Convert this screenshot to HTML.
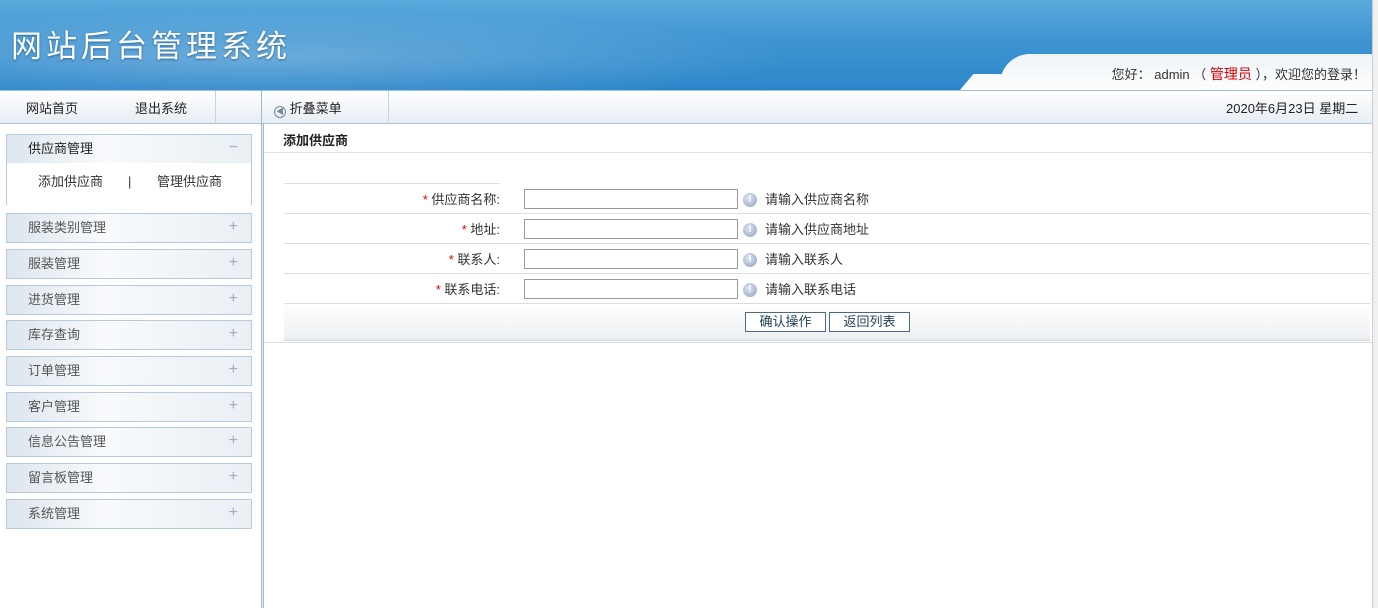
<!DOCTYPE html>
<html><head><meta charset="utf-8">
<style>
*{margin:0;padding:0;box-sizing:border-box}
body{width:1378px;height:608px;overflow:hidden;background:#fff;font-family:"Liberation Sans","Noto Sans CJK SC",sans-serif;font-size:12px;line-height:16px;color:#333;position:relative}
.hdr{position:absolute;left:0;top:0;width:1372px;height:90px;background:linear-gradient(180deg,#5aa9dc 0%,#3f95d2 45%,#2b86c9 100%);overflow:hidden}
.hdr .glow{position:absolute;left:-100px;top:10px;width:900px;height:80px;background:radial-gradient(ellipse at 40% 60%,rgba(255,255,255,.25),rgba(255,255,255,0) 70%)}
.title{position:absolute;left:11px;top:25px;font-size:31px;line-height:38px;color:#fff;letter-spacing:4px;font-family:"Noto Sans CJK SC",sans-serif;text-shadow:0 1px 2px rgba(0,40,90,.5)}
.tab{position:absolute;left:1000px;top:54px;width:400px;height:40px;background:linear-gradient(180deg,#eef3f7,#fff);border-radius:30px 0 0 0}
.tab2{position:absolute;left:965px;top:74px;width:60px;height:20px;transform:skewX(-40deg);background:linear-gradient(180deg,#f6f9fb,#fff)}
.welcome{position:absolute;right:6px;top:66px;font-size:13px;color:#333}
.welcome b{color:#d00;font-weight:normal;font-size:14px}
.scroll{position:absolute;left:1372px;top:0;width:6px;height:608px;background:#f0f0f0;border-left:1px solid #ccc}
.nav{position:absolute;left:0;top:90px;width:1372px;height:34px;background:linear-gradient(180deg,#fff,#e6edf3);border-top:1px solid #9fc0dc;border-bottom:1px solid #a8c3da}
.nav span{position:absolute;top:10px;font-size:13px;color:#222}
.vl{position:absolute;top:0;width:1px;height:33px;background:#c7d3de}
.side{position:absolute;left:261px;top:124px;width:3px;height:484px;border-left:1px solid #9fbbd3;border-right:1px solid #9fbbd3;background:#e6eef5}
.box{position:absolute;left:6px;width:246px;border:1px solid #b7cbdc;background:#fff}
.item{height:28px;background:linear-gradient(90deg,#dde6ee,#f8fafc 40%,#e9eff4);font-size:13px;color:#555;padding:6px 0 0 21px;position:relative}
.item i{position:absolute;right:13px;top:5px;font-style:normal;color:#aab;font-size:16px;line-height:16px}
.sub{height:42px;font-size:13px;color:#333;position:relative}
.sub span{position:absolute;top:11px}
.ctitle{position:absolute;left:264px;top:124px;width:1108px;height:29px;border-bottom:1px solid #dbe3ea;font-weight:bold;font-size:13px;color:#222;padding:9px 0 0 19px}
.row{position:absolute;left:284px;width:1086px;height:30px;border-bottom:1px solid #dcdcdc}
.row .l{position:absolute;right:870px;top:8px;font-size:13px;color:#333}
.row .l em{color:#d00;font-style:normal}
.row input{position:absolute;left:240px;top:5px;width:214px;height:20px;border:1px solid #999;background:#fff}
.row .ic{position:absolute;left:459px;top:9px;width:14px;height:14px;border-radius:50%;background:radial-gradient(circle at 40% 35%,#dbe4f2,#8fa2bf);color:#fff;font-size:10px;text-align:center;line-height:14px;font-weight:bold}
.row .h{position:absolute;left:481px;top:8px;font-size:13px}
.btnrow{position:absolute;left:284px;top:304px;width:1086px;height:37px;background:linear-gradient(180deg,#fff,#eceff2);border-bottom:1px solid #cfd6dc}
.btn{position:absolute;top:8px;height:20px;border:1px solid #4b6a8a;background:#fff;font-size:13px;color:#245;text-align:center;line-height:18px}
</style></head><body>
<div class="hdr"><div class="glow"></div><div class="title">网站后台管理系统</div><div class="tab2"></div><div class="tab"></div>
<div class="welcome">您好： admin （ <b>管理员</b> ），欢迎您的登录！</div></div>
<div class="scroll"></div>
<div class="nav">
<span style="left:26px">网站首页</span><span style="left:135px">退出系统</span>
<div class="vl" style="left:215px"></div><div class="vl" style="left:261px;background:#9fbbd3"></div>
<span style="left:274px"><span style="position:static;display:inline-block;width:12px;height:12px;border:1px solid #789;border-radius:50%;font-size:8px;line-height:10px;text-align:center;color:#789;vertical-align:-1px">◀</span> 折叠菜单</span>
<div class="vl" style="left:388px"></div>
<span style="left:1226px">2020年6月23日 星期二</span>
</div>
<div class="side"></div>
<div class="box" style="top:134px;height:71px"><div class="item" style="color:#222">供应商管理<i>−</i></div>
<div class="sub" style="background:#fff"><span style="left:31px">添加供应商</span><span style="left:121px">|</span><span style="left:150px">管理供应商</span></div></div>
<div class="box" style="top:213px"><div class="item">服装类别管理<i>+</i></div></div>
<div class="box" style="top:249px"><div class="item">服装管理<i>+</i></div></div>
<div class="box" style="top:285px"><div class="item">进货管理<i>+</i></div></div>
<div class="box" style="top:320px"><div class="item">库存查询<i>+</i></div></div>
<div class="box" style="top:356px"><div class="item">订单管理<i>+</i></div></div>
<div class="box" style="top:392px"><div class="item">客户管理<i>+</i></div></div>
<div class="box" style="top:427px"><div class="item">信息公告管理<i>+</i></div></div>
<div class="box" style="top:463px"><div class="item">留言板管理<i>+</i></div></div>
<div class="box" style="top:499px"><div class="item">系统管理<i>+</i></div></div>
<div class="ctitle">添加供应商</div>
<div style="position:absolute;left:284px;top:183px;width:216px;height:1px;background:#dcdcdc"></div>
<div class="row" style="top:184px"><span class="l"><em>*</em> 供应商名称:</span><input><span class="ic">!</span><span class="h">请输入供应商名称</span></div>
<div class="row" style="top:214px"><span class="l"><em>*</em> 地址:</span><input><span class="ic">!</span><span class="h">请输入供应商地址</span></div>
<div class="row" style="top:244px"><span class="l"><em>*</em> 联系人:</span><input><span class="ic">!</span><span class="h">请输入联系人</span></div>
<div class="row" style="top:274px"><span class="l"><em>*</em> 联系电话:</span><input><span class="ic">!</span><span class="h">请输入联系电话</span></div>
<div class="btnrow"><div class="btn" style="left:461px;width:81px">确认操作</div><div class="btn" style="left:545px;width:81px">返回列表</div></div>
<div style="position:absolute;left:264px;top:342px;width:1108px;height:1px;background:#dcdcdc"></div>
</body></html>
